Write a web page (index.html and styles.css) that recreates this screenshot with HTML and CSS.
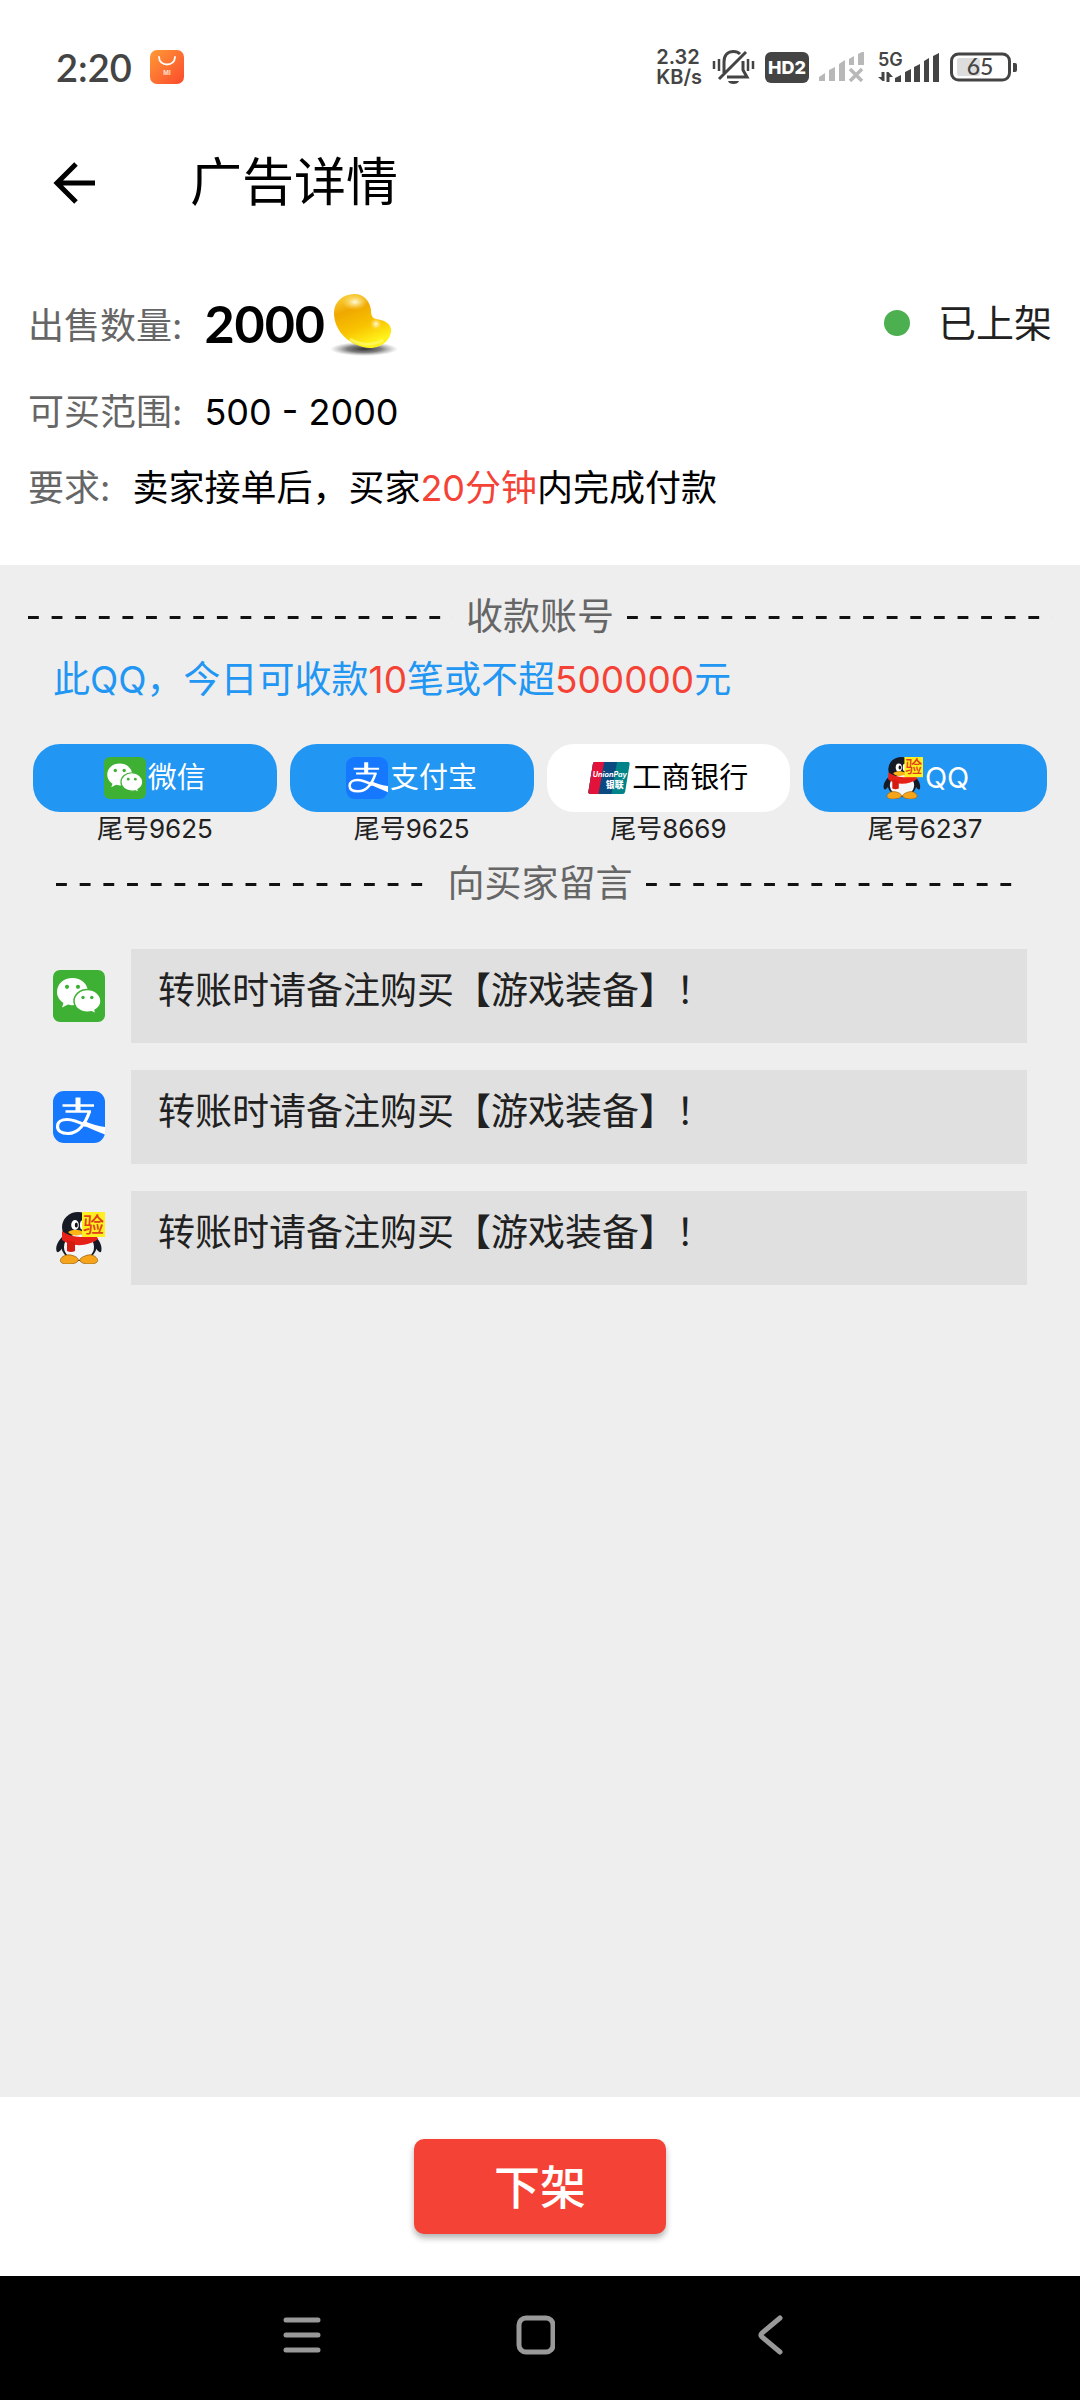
FILE: index.html
```html
<!DOCTYPE html>
<html lang="zh-CN">
<head>
<meta charset="utf-8">
<meta name="viewport" content="width=device-width, initial-scale=1">
<title>广告详情</title>
<link rel="stylesheet" href="styles.css">
</head>
<body>
<svg class="defs" aria-hidden="true">
  <defs>
    <linearGradient id="store-fill" x1="0" y1="0" x2="1" y2="1"><stop offset="0" stop-color="#ff9a36"/><stop offset="1" stop-color="#fb4a2c"/></linearGradient>
    <linearGradient id="bean-fill" x1="0" y1="0" x2="0.4" y2="1"><stop offset="0" stop-color="#fbd84a"/><stop offset="0.35" stop-color="#f0a800"/><stop offset="0.7" stop-color="#f9c400"/><stop offset="1" stop-color="#fff21a"/></linearGradient>
    <radialGradient id="bean-glow"><stop offset="0" stop-color="#fffbe0"/><stop offset="1" stop-color="#ffe26a" stop-opacity="0"/></radialGradient>
    <radialGradient id="bean-shadow"><stop offset="0" stop-color="#333"/><stop offset="0.5" stop-color="#555" stop-opacity="0.75"/><stop offset="1" stop-color="#888" stop-opacity="0"/></radialGradient>
    <clipPath id="card-clip"><path d="M9 9H49Q52 9 51.500 12L46 46Q45.500 49 42.500 49H3Q0 49 0.500 46L6 12Q6.500 9 9 9z"/></clipPath>
  </defs>
  <symbol id="wechat" viewBox="0 0 52 52">
    <rect width="52" height="52" rx="7" fill="#3eb135"/>
    <path d="M19.500 8C10.500 8 4 14 4 22c0 4.500 2.500 8.500 6.500 11L9 37.500l6-3c2 .5 3 .7 4.500 .7C28 35.200 35 30 35 22S28 8 19.500 8z" fill="#fff"/>
    <path d="M34.500 19.500c-7.500 0-13.500 5-13.500 11.500s6 11.300 13.500 11.300c1.500 0 3-.2 4-.5l4.500 2.200-1-3.800c3.500-2 6-5.200 6-9.200 0-6.500-6-11.500-13.500-11.500z" fill="#fff" stroke="#3eb135" stroke-width="1.500"/>
    <g fill="#3eb135"><circle cx="14" cy="16.800" r="2.100"/><circle cx="25" cy="16.800" r="2.100"/><circle cx="30" cy="27.500" r="1.700"/><circle cx="38.800" cy="27.500" r="1.700"/></g>
  </symbol>
  <symbol id="alipay" viewBox="0 0 52 52">
    <rect width="52" height="52" rx="11" fill="#1677ff"/>
    <path d="M31 30C39 33.500 46 35 52 36V43.500C43 40 36 37 28 33.500z" fill="#fff"/>
    <path d="M9.500 14.500H41M12.500 20.500H38" stroke="#fff" stroke-width="2.400" fill="none"/>
    <path d="M25 6.500V20" stroke="#fff" stroke-width="5" fill="none"/>
    <path d="M36.500 20.500C33 31 26 42.500 15 42.500 8 42.500 4.500 39.500 4.500 35.500 4.500 31 8.500 28.500 14 28.500 21 28.500 27 31.500 33 34.500" stroke="#fff" stroke-width="3.200" fill="none"/>
  </symbol>
  <symbol id="qq" viewBox="0 0 52 52">
    <path d="M9 25C4 30 2 36 4 40c2 1 5-3 7-7zM43 25c5 5 6.500 11 5 15-2 1-5-3-7-7z" fill="#161a24"/>
    <ellipse cx="26" cy="33" rx="18" ry="16" fill="#161a24"/>
    <ellipse cx="25" cy="15" rx="16" ry="15" fill="#161a24"/>
    <ellipse cx="26" cy="35" rx="15" ry="13" fill="#f4f6f8"/>
    <path d="M8 46.500c2-3 7-5 13-2.500 3 1 5 3 4 5-2 3-8 3-12 3-4-.3-7-2-5-5.500zM44 46.500c-2-3-7-5-12-2.500-3 1-6 3-5 5 2 3 8 3 11 3 5-.3 8-2 6-5.500z" fill="#f6a51b" stroke="#9c6410" stroke-width=".8"/>
    <path d="M9 19c9 7 24 8 33 2l3 6c-10 8-27 8-36 1z" fill="#e62117"/>
    <path d="M14 28l8 2v9q-4 2-8 0z" fill="#d31b12"/>
    <ellipse cx="22" cy="13" rx="3.800" ry="5" fill="#fff"/><ellipse cx="23.300" cy="13" rx="1.500" ry="2.500" fill="#111"/>
    <ellipse cx="29" cy="13" rx="2" ry="4.500" fill="#fff"/>
    <path d="M15 20c5-3 10-3 16 0-3 4-12 5-16 0z" fill="#fbb516"/>
    <rect x="29" y="0" width="23" height="25" fill="#ffee20"/>
    <text x="40.500" y="20" text-anchor="middle" class="badge-text">验</text>
  </symbol>
  <symbol id="unionpay" viewBox="0 3 52 52">
    <g clip-path="url(#card-clip)">
      <rect y="9" width="52" height="40" fill="#00848a"/>
      <path d="M0 9H36L29 49H0z" fill="#0b4a80"/>
      <path d="M0 9H20L13 49H0z" fill="#e3123a"/>
    </g>
    <text x="27" y="28" text-anchor="middle" class="card-latin">UnionPay</text>
    <text x="33" y="42" text-anchor="middle" class="card-cjk">银联</text>
  </symbol>
</svg>

<header class="status">
  <div class="status-side">
    <time class="clock">2:20</time>
    <svg class="store" viewBox="0 0 34 34" aria-hidden="true"><rect width="34" height="34" rx="7" fill="url(#store-fill)"/><path d="M9 7C9 17 25 17 25 7" fill="none" stroke="#fff" stroke-width="1.800" stroke-linecap="round"/><text x="17" y="25" text-anchor="middle" class="store-text">MI</text></svg>
  </div>
  <div class="status-side status-icons">
    <span class="speed">2.32<br>KB/s</span>
    <svg width="43" height="36" viewBox="0 0 43 36" fill="none" stroke="#444" stroke-width="3" aria-hidden="true"><path d="M12 24V13C12 6 16 2.500 21.500 2.500c3 0 5 .9 6.500 2.500M31 12v9l4 7H15M7 30L34 3" /><path d="M16 32h11q-1 3-5.500 3T16 32z" fill="#444" stroke="none"/><path d="M2 12v8M7 10v12M36 10v12M41 12v8" stroke-width="2.500"/></svg>
    <span class="hd">HD2</span>
    <svg width="45" height="30" viewBox="0 0 45 30" fill="#b8b8b8" aria-hidden="true"><path d="M0 29v-4l6-4v8zM10 29V18l6-3v14zM20 29V12l6-4v21zM30 13V7l5-3v9zM39 13V2l6-3v14z"/><path d="M31 17l12 12M43 17L31 29" stroke="#b8b8b8" stroke-width="3.500"/></svg>
    <svg class="signal" width="62" height="34" viewBox="0 0 62 34" fill="#444" aria-hidden="true"><text x="0" y="16" class="net-text">5G</text><path d="M3.500 22h3v9h-2L0 27h3.500zM8.500 32V22h2l4.500 5h-3.500v5z"/><path d="M17 32v-4l6-3v7zM27 32V22l6-3v13zM36 32V17l6-3v18zM46 32V11l5-3v24zM55 32V6l6-3v29z"/></svg>
    <svg width="68" height="30" viewBox="0 0 68 30" aria-hidden="true"><rect x="7" y="6" width="23" height="18" rx="2" fill="#ddd"/><rect x="1.500" y="2" width="58" height="26" rx="7" fill="none" stroke="#444" stroke-width="3"/><path d="M63 11h2q2 0 2 2v5q0 2-2 2h-2z" fill="#444"/><text x="30" y="23" text-anchor="middle" class="battery-text">65</text></svg>
  </div>
</header>

<nav class="appbar">
  <button class="back" type="button" aria-label="返回"><svg width="44" height="44" viewBox="0 0 44 44" fill="none" stroke="#000" stroke-width="5" aria-hidden="true"><path d="M24 3L5 22L24 41M4 22H43"/></svg></button>
  <h1 class="title">广告详情</h1>
</nav>

<section class="detail">
  <div class="row row-main">
    <span class="label">出售数量:</span><strong class="amount">2000</strong>
    <svg class="bean" width="68" height="64" viewBox="0 0 68 64" aria-hidden="true"><ellipse cx="33" cy="56" rx="34" ry="7" fill="url(#bean-shadow)"/><path d="M22 1C32 0 39 8 40 17c0 5 1 8 5 9 8 1 14 4 15 10 1 9-8 19-21 19C20 54 3 39 3 20 3 9 11 2 22 1z" fill="url(#bean-fill)"/><ellipse cx="24" cy="9" rx="13" ry="8" fill="url(#bean-glow)"/><ellipse cx="45" cy="31" rx="6" ry="6" fill="url(#bean-glow)"/><path d="M19 46q17 10 33 1" fill="none" stroke="#fffb70" stroke-width="3" opacity=".7"/></svg>
    <span class="state"><i class="dot"></i>已上架</span>
  </div>
  <div class="row"><span class="label">可买范围:</span><span>500 - 2000</span></div>
  <div class="row"><span class="label">要求:</span><span>卖家接单后，买家<em>20分钟</em>内完成付款</span></div>
</section>

<main class="content">
  <h2 class="divider">收款账号</h2>
  <p class="notice">此QQ，今日可收款<em>10</em>笔或不超<em>500000</em>元</p>
  <ul class="accounts">
    <li><button class="pill" type="button"><svg class="pill-icon" aria-hidden="true"><use href="#wechat"/></svg>微信</button><span class="tail">尾号9625</span></li>
    <li><button class="pill" type="button"><svg class="pill-icon" aria-hidden="true"><use href="#alipay"/></svg>支付宝</button><span class="tail">尾号9625</span></li>
    <li><button class="pill pill-off" type="button"><svg class="pill-icon" aria-hidden="true"><use href="#unionpay"/></svg>工商银行</button><span class="tail">尾号8669</span></li>
    <li><button class="pill" type="button"><svg class="pill-icon" aria-hidden="true"><use href="#qq"/></svg>QQ</button><span class="tail">尾号6237</span></li>
  </ul>
  <h2 class="divider divider-inset">向买家留言</h2>
  <div class="messages">
    <label class="message"><svg class="message-icon" role="img" aria-label="微信"><use href="#wechat"/></svg><input type="text" value="转账时请备注购买【游戏装备】！"></label>
    <label class="message"><svg class="message-icon" role="img" aria-label="支付宝"><use href="#alipay"/></svg><input type="text" value="转账时请备注购买【游戏装备】！"></label>
    <label class="message"><svg class="message-icon" role="img" aria-label="QQ"><use href="#qq"/></svg><input type="text" value="转账时请备注购买【游戏装备】！"></label>
  </div>
</main>

<footer class="actions"><button class="remove" type="button">下架</button></footer>

<nav class="system">
  <button type="button" aria-label="菜单"><svg width="40" height="40" viewBox="0 0 40 40" aria-hidden="true"><path d="M5 5H37M5 20H37M5 35H37"/></svg></button>
  <button type="button" aria-label="主页"><svg width="40" height="40" viewBox="0 0 40 40" aria-hidden="true"><rect x="4" y="3" width="34" height="34" rx="7"/></svg></button>
  <button type="button" aria-label="后退"><svg width="40" height="40" viewBox="0 0 40 40" aria-hidden="true"><path d="M32 3L14 18Q12 20 14 22L32 37"/></svg></button>
</nav>
</body>
</html>
```
FILE: styles.css
```css
* {
  box-sizing: border-box;
}

body {
  margin: 0;
  min-height: 100vh;
  display: flex;
  flex-direction: column;
  background: #fff;
  color: #000;
  font-family: Inter, "Noto Sans CJK SC", sans-serif;
  font-size: 37px;
  line-height: 52px;
}

button,
input {
  border: 0;
  font: inherit;
}

button {
  padding: 0;
  background: none;
}

em {
  color: #f44336;
  font-style: normal;
}

svg {
  display: block;
  flex: none;
}

.defs {
  position: absolute;
  width: 0;
  height: 0;
}

/* Status bar */
.status {
  display: flex;
  justify-content: space-between;
  align-items: center;
  height: 134px;
  padding: 0 62px 0 56px;
  color: #444;
}

.status-side {
  display: flex;
  align-items: center;
}

.clock {
  font: 600 38px/48px Lato, sans-serif;
  margin-right: 18px;
}

.store {
  width: 34px;
  height: 34px;
}

.store-text {
  font: 700 6px Inter, sans-serif;
  fill: #ffe0d0;
}

.status-icons {
  gap: 10px;
}

.speed {
  font: 600 20px/20px Inter, sans-serif;
}

.hd {
  width: 44px;
  border-radius: 6px;
  background: #444;
  color: #fff;
  font: 800 18px/31px Inter, sans-serif;
  text-align: center;
}

.signal {
  margin-left: 4px;
}

.net-text {
  font: 600 18px Inter, sans-serif;
}

.battery-text {
  font: 500 23px Lato, sans-serif;
  fill: #444;
}

/* Title bar */
.appbar {
  display: flex;
  align-items: center;
  gap: 94px;
  height: 98px;
  padding: 0 52px;
}

.title {
  margin: 0;
  font-size: 52px;
  font-weight: 400;
  line-height: 76px;
}

/* Offer details */
.detail {
  padding: 53px 28px 39px;
  font-size: 36px;
}

.row {
  display: flex;
  align-items: center;
  gap: 22px;
  min-height: 76px;
}

.row-main {
  margin-bottom: 13px;
}

.label {
  color: #666;
}

.row-main .label {
  padding-top: 6px;
}

.amount {
  font: 700 52px/64px Lato, sans-serif;
}

.bean {
  margin: 4px 0 0 -16px;
}

.state {
  display: flex;
  align-items: center;
  gap: 28px;
  margin-left: auto;
  color: #212121;
  font-size: 38px;
}

.dot {
  width: 26px;
  height: 26px;
  border-radius: 50%;
  background: #4caf50;
}

/* Accounts and messages */
.content {
  flex: 1;
  padding: 26px 0;
  background: #eee;
}

.divider {
  display: flex;
  align-items: center;
  gap: 13px;
  margin: 0;
  padding: 0 28px;
  color: #666;
  font-size: 37px;
  font-weight: 400;
}

.divider::before,
.divider::after {
  content: "";
  flex: 1;
  height: 3px;
  background: linear-gradient(to right, #111 46%, transparent 46%) 0 0 / 24px 3px round;
}

.divider-inset {
  padding: 0 56px;
}

.notice {
  margin: 11px 0 38px;
  padding: 0 53px;
  color: #2196f3;
}

.accounts {
  display: grid;
  grid-template-columns: repeat(4, 1fr);
  gap: 13px;
  margin: 0 0 12px;
  padding: 0 33px;
  list-style: none;
  text-align: center;
}

.pill {
  display: flex;
  align-items: center;
  justify-content: center;
  gap: 2px;
  width: 100%;
  height: 68px;
  border-radius: 27px;
  background: #2196f3;
  color: #fff;
  font-size: 29px;
}

.pill-off {
  background: #fff;
  color: #000;
}

.pill-icon {
  width: 42px;
  height: 42px;
}

.tail {
  display: block;
  color: #212121;
  font-size: 26px;
  line-height: 34px;
}

.messages {
  display: grid;
  gap: 27px;
  padding: 39px 53px 0;
}

.message {
  display: flex;
  align-items: center;
  gap: 26px;
}

.message-icon {
  width: 52px;
  height: 52px;
}

.message input {
  flex: 1;
  min-width: 0;
  height: 94px;
  padding: 0 27px 16px;
  background: #e0e0e0;
  color: #212121;
}

.badge-text {
  font: 500 21px "Noto Sans CJK SC", sans-serif;
  fill: #e0401a;
}

.card-latin {
  font: italic 700 9px Inter, sans-serif;
  fill: #fff;
}

.card-cjk {
  font: 900 11px "Noto Sans CJK SC", sans-serif;
  fill: #fff;
}

/* Bottom action */
.actions {
  display: flex;
  justify-content: center;
  padding: 42px;
}

.remove {
  width: 252px;
  height: 95px;
  border-radius: 10px;
  background: #f44336;
  box-shadow: 0 4px 6px rgba(0, 0, 0, 0.3);
  color: #fff;
  font-size: 46px;
  font-weight: 500;
}

/* System navigation */
.system {
  display: flex;
  align-items: center;
  justify-content: space-between;
  height: 124px;
  padding: 0 27% 6px 26%;
  background: #000;
}

.system svg {
  fill: none;
  stroke: #999;
  stroke-width: 5px;
  stroke-linecap: round;
}
```
